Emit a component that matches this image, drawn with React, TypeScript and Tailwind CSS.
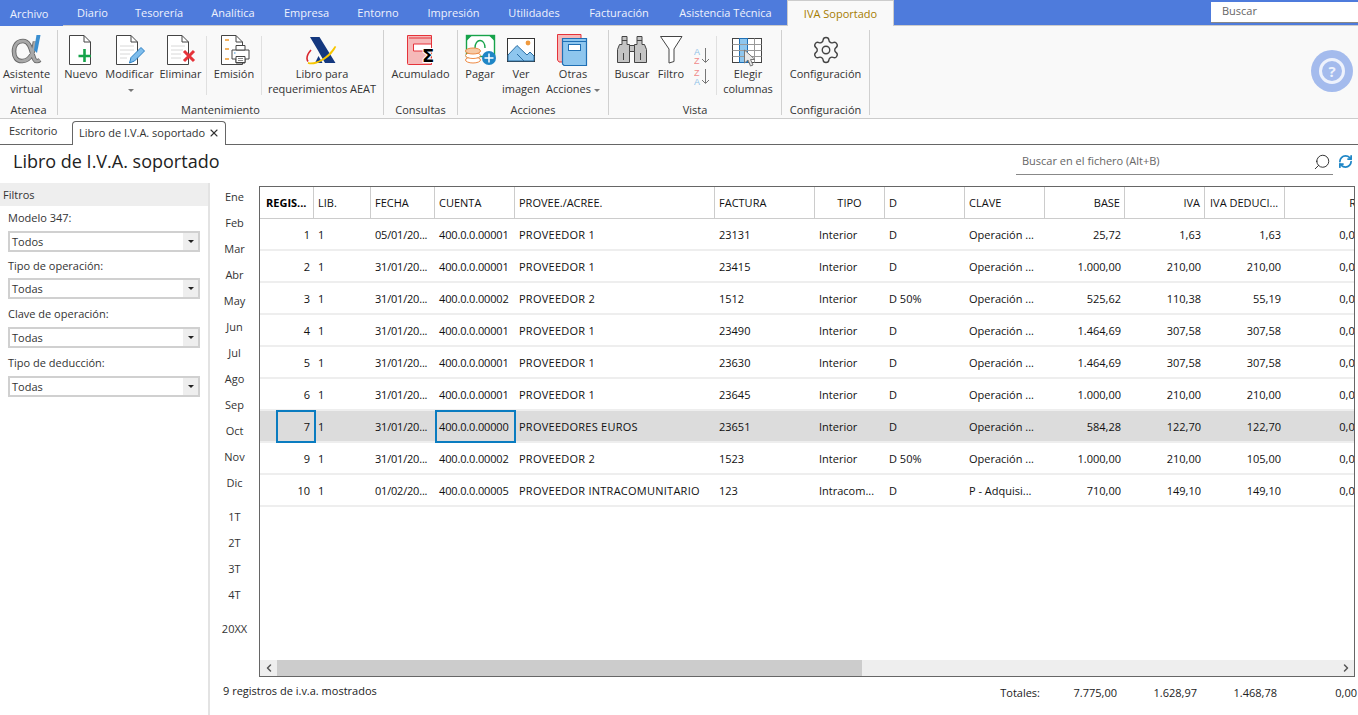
import { FC, ReactNode } from "react";
import { ChevronLeft, ChevronRight, RefreshCw, Search, Settings, X } from "lucide-react";

const menus = [
  { label: "Diario", w: "w-[59px]" },
  { label: "Tesorería", w: "w-[74px]" },
  { label: "Analítica", w: "w-[74px]" },
  { label: "Empresa", w: "w-[73px]" },
  { label: "Entorno", w: "w-[70px]" },
  { label: "Impresión", w: "w-[81px]" },
  { label: "Utilidades", w: "w-[80px]" },
  { label: "Facturación", w: "w-[90px]" },
  { label: "Asistencia Técnica", w: "w-[123px]" },
];

const months = ["Ene", "Feb", "Mar", "Abr", "May", "Jun", "Jul", "Ago", "Sep", "Oct", "Nov", "Dic"];
const quarters = ["1T", "2T", "3T", "4T"];

const filters = [
  { label: "Modelo 347:", value: "Todos", gap: "mt-0", selectGap: "mt-[6px]" },
  { label: "Tipo de operación:", value: "Todas", gap: "mt-[6px]", selectGap: "mt-[5px]" },
  { label: "Clave de operación:", value: "Todas", gap: "mt-[7px]", selectGap: "mt-[6px]" },
  { label: "Tipo de deducción:", value: "Todas", gap: "mt-[7px]", selectGap: "mt-[6px]" },
];

const rows = [
  ["1", "05/01/20...", "400.0.0.00001", "PROVEEDOR 1", "23131", "Interior", "D", "Operación ...", "25,72", "1,63", "1,63"],
  ["2", "31/01/20...", "400.0.0.00001", "PROVEEDOR 1", "23415", "Interior", "D", "Operación ...", "1.000,00", "210,00", "210,00"],
  ["3", "31/01/20...", "400.0.0.00002", "PROVEEDOR 2", "1512", "Interior", "D 50%", "Operación ...", "525,62", "110,38", "55,19"],
  ["4", "31/01/20...", "400.0.0.00001", "PROVEEDOR 1", "23490", "Interior", "D", "Operación ...", "1.464,69", "307,58", "307,58"],
  ["5", "31/01/20...", "400.0.0.00001", "PROVEEDOR 1", "23630", "Interior", "D", "Operación ...", "1.464,69", "307,58", "307,58"],
  ["6", "31/01/20...", "400.0.0.00001", "PROVEEDOR 1", "23645", "Interior", "D", "Operación ...", "1.000,00", "210,00", "210,00"],
  ["7", "31/01/20...", "400.0.0.00000", "PROVEEDORES EUROS", "23651", "Interior", "D", "Operación ...", "584,28", "122,70", "122,70"],
  ["9", "31/01/20...", "400.0.0.00002", "PROVEEDOR 2", "1523", "Interior", "D 50%", "Operación ...", "1.000,00", "210,00", "105,00"],
  ["10", "01/02/20...", "400.0.0.00005", "PROVEEDOR INTRACOMUNITARIO", "123", "Intracom...", "D", "P - Adquisi...", "710,00", "149,10", "149,10"],
];

const Box: FC<{ children: ReactNode }> = ({ children }) => (
  <svg width="36" height="36" viewBox="0 0 36 36" fill="none">
    {children}
  </svg>
);

const DocShape: FC<{ x: number }> = ({ x }) => (
  <>
    <path d={`M${x + 0.5} 3.5H${x + 15}L${x + 21.5} 10V32.5H${x + 0.5}Z`} fill="#fff" stroke="#444" />
    <path d={`M${x + 15} 3.5V10H${x + 21.5}`} stroke="#444" />
  </>
);

const alphaPath = "M26 9.5C24.5 20 22 28.5 13.5 29C7.5 29.5 5 25 5 19.5C5 13 8.5 9 14 9C22 9 22.5 22 25.5 27.5C26.5 29.5 29 29.5 31 28";

const AlphaIcon = () => (
  <Box>
    <path d={alphaPath} stroke="#666" strokeWidth="4.6" />
    <path d={alphaPath} stroke="#a8a8a8" strokeWidth="2.8" />
    <path d="M27.5 3H31.5L28 21L25 18Z" fill="#3b8fd0" />
  </Box>
);

const NewIcon = () => (
  <Box>
    <DocShape x={6} />
    <path d="M21.5 17V30M15.5 24H28" stroke="#16a34a" strokeWidth="2.6" />
  </Box>
);

const EditIcon = () => (
  <Box>
    <DocShape x={4} />
    <path d="M8 14H22M8 18H22M8 22H18M8 26H15" stroke="#d8d8d8" />
    <path d="M17.5 31L19 25.5L29 15.5L32.5 19L22.5 29Z" fill="#7fbdec" stroke="#2b7fc4" />
  </Box>
);

const DeleteIcon = () => (
  <Box>
    <DocShape x={4} />
    <path d="M8 14H22M8 18H20M8 22H18M8 26H18" stroke="#d8d8d8" />
    <path d="M21 19L31 29M31 19L21 29" stroke="#e5333a" strokeWidth="3" />
  </Box>
);

const PrintIcon = () => (
  <Box>
    <DocShape x={5} />
    <path d="M9 8H13M9 17H13M9 27H13" stroke="#ef9a2e" strokeWidth="1.4" />
    <path d="M16 18H33V27H29V31H20V27H16Z" fill="#fff" stroke="#444" />
    <path d="M20 13.5H29V18H20Z" fill="#fff" stroke="#444" />
    <path d="M20 24.5H29V30.5H20Z" fill="#fff" stroke="#444" />
    <path d="M22 26.5H27M22 28.5H27" stroke="#888" />
    <path d="M18 21H19.5" stroke="#3b8fd0" />
  </Box>
);

const AeatIcon = () => (
  <Box>
    <path d="M6 5H15.5L31.5 31H21L14 18.5Z" fill="#14387f" />
    <path d="M11 31L14.5 24L18.5 31Z" fill="#14387f" />
    <path d="M4 31C12 33.5 24 26 31.5 14.5C27 24.5 14 32.5 4 31Z" fill="#f7c600" stroke="#f7c600" strokeWidth="1.6" />
    <path d="M7 18C3.5 22 2 26.5 4 29.5" stroke="#d9282f" strokeWidth="1.6" />
  </Box>
);

const SumIcon = () => (
  <Box>
    <path d="M4.5 3.5H28.5V32.5H5.5Q4.5 32.5 4.5 31.5Z" fill="#f5b9b9" stroke="#e5333a" />
    <path d="M6 6H28" stroke="#e5333a" />
    <path d="M10.5 12H28.5V19H10.5Z" fill="#fff" stroke="#e5333a" />
    <text x="19" y="30" fontFamily="DejaVu Sans, sans-serif" fontSize="18" fontWeight="700" fill="#000" stroke="#fff" strokeWidth="2" paintOrder="stroke">
      Σ
    </text>
  </Box>
);

const PayIcon = () => (
  <Box>
    <rect x="4.5" y="3.5" width="28" height="21" fill="#fff" stroke="#17a34a" strokeWidth="1.4" />
    <path d="M4.5 3.5H10L4.5 9ZM32.5 3.5H27L32.5 9ZM4.5 24.5V19L10 24.5Z" fill="#17a34a" />
    <path d="M13 16C13 6 23 6 23 16" stroke="#17a34a" strokeWidth="1.4" />
    <ellipse cx="11" cy="28" rx="7.5" ry="3" fill="#fff" stroke="#ee8a44" />
    <ellipse cx="11" cy="23.5" rx="7.5" ry="3" fill="#fff" stroke="#ee8a44" />
    <ellipse cx="11" cy="19" rx="7.5" ry="3" fill="#f6c9a4" stroke="#ee8a44" />
    <circle cx="27" cy="26" r="7" fill="#1f86c6" />
    <path d="M27 21.5V30.5M22.5 26H31.5" stroke="#fff" strokeWidth="1.5" />
  </Box>
);

const ImageIcon = () => (
  <Box>
    <rect x="4.5" y="6.5" width="27" height="23" fill="#fff" stroke="#333" />
    <path d="M5 23L14 13.5L24 23L27 20L31 24V29H5Z" fill="#8ec6ee" stroke="#2b6ea3" />
    <path d="M14 22L21 29" stroke="#2b6ea3" />
    <circle cx="25" cy="11" r="2.4" fill="#f09a3e" />
  </Box>
);

const BooksIcon = () => (
  <Box>
    <path d="M2.5 2.5H26V30H4L2.5 28Z" fill="#f5b9b9" stroke="#e5333a" />
    <path d="M7.5 6.5H31.5V33.5H9L7.5 32Z" fill="#8ec6ee" stroke="#1f6fb4" strokeWidth="1.2" />
    <path d="M8 9.5H31" stroke="#1f6fb4" />
    <rect x="13.5" y="12.5" width="12" height="6" fill="#fff" stroke="#1f6fb4" />
  </Box>
);

const BinocularsIcon = () => (
  <Box>
    <path d="M3.5 17.5L5.5 12.5H8V4.5H13V12.5H15.5V30.5H3.5Z" fill="#c4c4c4" stroke="#444" />
    <path d="M32.5 17.5L30.5 12.5H28V4.5H23V12.5H20.5V30.5H32.5Z" fill="#c4c4c4" stroke="#444" />
    <path d="M15.5 13.5H20.5V19.5H15.5Z" fill="#c4c4c4" stroke="#444" />
    <path d="M9.5 21V28M26.5 21V28" stroke="#444" />
    <path d="M8 8.5H13M23 8.5H28" stroke="#444" />
  </Box>
);

const FunnelIcon = () => (
  <Box>
    <path d="M7.5 4.5H29L21 17V29.5L16 31V17Z" fill="#fff" stroke="#444" />
  </Box>
);

const SortIcon: FC<{ top: string; bottom: string; topColor: string; bottomColor: string }> = ({
  top,
  bottom,
  topColor,
  bottomColor,
}) => (
  <svg width="16" height="18" viewBox="0 0 16 18" fill="none">
    <text x="0" y="8" fontFamily="Liberation Sans, sans-serif" fontSize="9" fill={topColor}>
      {top}
    </text>
    <text x="0" y="17" fontFamily="Liberation Sans, sans-serif" fontSize="9" fill={bottomColor}>
      {bottom}
    </text>
    <path d="M11.5 1V15M8 12L11.5 15.5L15 12" stroke="#777" />
  </svg>
);

const ColumnsIcon = () => (
  <Box>
    <rect x="2.5" y="6.5" width="29" height="24" fill="#fff" stroke="#444" />
    <rect x="9.5" y="6.5" width="8" height="24" fill="#8ec6ee" stroke="#1f6fb4" />
    <path d="M2.5 12.5H31.5M2.5 18.5H31.5M2.5 24.5H31.5M24.5 6.5V30.5" stroke="#999" />
    <path d="M14.5 18V31L18 28L20.5 34L23 33L20.5 27.5H25Z" fill="#e8e8e8" stroke="#777" />
  </Box>
);

const Item: FC<{ w: string; icon: ReactNode; children?: ReactNode }> = ({ w, icon, children }) => (
  <div className={`${w} flex flex-col items-center text-center leading-[15px]`}>
    <div className="flex h-[34px] w-[36px] items-start justify-center">{icon}</div>
    <div className="whitespace-nowrap">{children}</div>
  </div>
);

const Group: FC<{ w: string; label: string; children: ReactNode }> = ({ w, label, children }) => (
  <div className={`${w} mb-[3px] mt-[4px] flex shrink-0 flex-col border-r border-[#d0d0d0] pt-[2px]`}>
    <div className="flex h-[70px]">{children}</div>
    <div className="-mb-[2px] mt-auto text-center leading-[15px]">{label}</div>
  </div>
);

const Divider = () => <div className="mb-[7px] mt-[4px] w-px bg-[#e0e0e0]" />;

const Caret = () => (
  <span className="ml-[3px] inline-block border-x-[3px] border-t-[3px] border-x-transparent border-t-[#777] align-middle" />
);

const Ribbon = () => (
  <div className="flex h-[94px] items-stretch border-y border-[#cccccc] bg-[#f9f9f9] text-[#333]">
    <Group w="w-[58px]" label="Atenea">
      <Item w="w-[53px]" icon={<AlphaIcon />}>
        Asistente
        <br />
        virtual
      </Item>
    </Group>
    <Group w="w-[326px]" label="Mantenimiento">
      <Item w="w-[46px]" icon={<NewIcon />}>
        Nuevo
      </Item>
      <Item w="w-[51px]" icon={<EditIcon />}>
        Modificar
        <br />
        <Caret />
      </Item>
      <Item w="w-[51px]" icon={<DeleteIcon />}>
        Eliminar
      </Item>
      <Divider />
      <Item w="w-[54px]" icon={<PrintIcon />}>
        Emisión
      </Item>
      <Divider />
      <Item w="w-[120px]" icon={<AeatIcon />}>
        Libro para
        <br />
        requerimientos AEAT
      </Item>
    </Group>
    <Group w="w-[74px]" label="Consultas">
      <Item w="w-[73px]" icon={<SumIcon />}>
        Acumulado
      </Item>
    </Group>
    <Group w="w-[151px]" label="Acciones">
      <Item w="w-[44px]" icon={<PayIcon />}>
        Pagar
      </Item>
      <Item w="w-[38px]" icon={<ImageIcon />}>
        Ver
        <br />
        imagen
      </Item>
      <Item w="w-[66px]" icon={<BooksIcon />}>
        Otras
        <br />
        Acciones
        <Caret />
      </Item>
    </Group>
    <Group w="w-[173px]" label="Vista">
      <Item w="w-[46px]" icon={<BinocularsIcon />}>
        Buscar
      </Item>
      <Item w="w-[32px]" icon={<FunnelIcon />}>
        Filtro
      </Item>
      <div className="flex w-[29px] flex-col items-center gap-[3px] pt-[15px]">
        <SortIcon top="A" bottom="Z" topColor="#8cbfe8" bottomColor="#f08a8a" />
        <SortIcon top="Z" bottom="A" topColor="#f08a8a" bottomColor="#8cbfe8" />
      </div>
      <Divider />
      <Item w="w-[62px]" icon={<ColumnsIcon />}>
        Elegir
        <br />
        columnas
      </Item>
    </Group>
    <Group w="w-[88px]" label="Configuración">
      <Item
        w="w-[87px]"
        icon={<Settings size={30} strokeWidth={1.1} color="#444" className="mt-[3px]" />}
      >
        Configuración
      </Item>
    </Group>
  </div>
);

const Select: FC<{ value: string; className: string }> = ({ value, className }) => (
  <div className={`${className} mx-2 flex h-[21px] items-center border-2 border-[#d0d0d0] bg-white pl-[2px]`}>
    <span className="flex-1 pt-px">{value}</span>
    <span className="flex h-full w-[15px] items-center justify-center bg-[#eeeeee]">
      <span className="border-x-[3px] border-t-[3px] border-x-transparent border-t-[#222]" />
    </span>
  </div>
);

const Sidebar = () => (
  <div className="mt-[5px] w-[210px] shrink-0 border-r-2 border-[#e3e3e3] text-[#333]">
    <div className="h-[23px] bg-[#eeeeee] pl-[3px] leading-[23px]">Filtros</div>
    <div className="pt-[4px]">
      {filters.map((filter) => (
        <div key={filter.label} className={filter.gap}>
          <div className="pl-2 leading-[15px]">{filter.label}</div>
          <Select value={filter.value} className={filter.selectGap} />
        </div>
      ))}
    </div>
  </div>
);

const Periods = () => (
  <div className="flex w-[49px] shrink-0 flex-col items-center pt-[6px] text-[#333]">
    {months.map((month) => (
      <div key={month} className="h-[26px] leading-[26px]">
        {month}
      </div>
    ))}
    <div className="mt-[8px]" />
    {quarters.map((quarter) => (
      <div key={quarter} className="h-[26px] leading-[26px]">
        {quarter}
      </div>
    ))}
    <div className="mt-[8px] h-[26px] leading-[26px]">20XX</div>
  </div>
);

const widths = [
  "w-[54px]",
  "w-[57px]",
  "w-[64px]",
  "w-[80px]",
  "w-[200px]",
  "w-[100px]",
  "w-[70px]",
  "w-[80px]",
  "w-[80px]",
  "w-[80px]",
  "w-[80px]",
  "w-[80px]",
  "w-[80px]",
];

const headers = [
  { t: "REGIS...", c: "pl-[6px] font-bold text-black" },
  { t: "LIB.", c: "pl-1" },
  { t: "FECHA", c: "pl-1" },
  { t: "CUENTA", c: "pl-1" },
  { t: "PROVEE./ACREE.", c: "pl-1" },
  { t: "FACTURA", c: "pl-1" },
  { t: "TIPO", c: "text-center" },
  { t: "D", c: "pl-1" },
  { t: "CLAVE", c: "pl-1" },
  { t: "BASE", c: "pr-1 text-right" },
  { t: "IVA", c: "pr-1 text-right" },
  { t: "IVA DEDUCI...", c: "pl-[5px]" },
  { t: "R", c: "pr-[8px] text-right" },
];

const Cell: FC<{ w: string; className?: string; children: ReactNode }> = ({ w, className, children }) => (
  <div className={`${w} h-full shrink-0 overflow-hidden whitespace-nowrap leading-[31px] ${className ?? ""}`}>{children}</div>
);

const Grid = () => (
  <div className="flex h-[491px] w-[1096px] flex-col overflow-hidden border border-[#666666] bg-white text-[#111]">
    <div className="flex h-[32px] w-[1200px] shrink-0 border-b border-[#cccccc] leading-[31px]">
      {headers.map((header, i) => (
        <div key={header.t} className={`${widths[i]} h-full shrink-0 overflow-hidden whitespace-nowrap border-r border-[#cccccc] ${header.c}`}>
          {header.t}
        </div>
      ))}
    </div>
    <div className="min-h-0 flex-1">
      {rows.map((row) => {
        const selected = row[0] === "7";
        return (
          <div
            key={row[0]}
            className={`flex h-[32px] w-[1200px] border-b-2 border-[#eeeeee] ${selected ? "bg-[#dcdcdc]" : "bg-white"}`}
          >
            <div className={`${widths[0]} relative h-full shrink-0 pr-[4px] text-right leading-[31px]`}>
              {row[0]}
              {selected && <div className="absolute bottom-[-2px] left-[16px] right-[-2px] top-[-1px] border-2 border-[#0a7cc0]" />}
            </div>
            <Cell w={widths[1]} className="pl-1">1</Cell>
            <Cell w={widths[2]} className="pl-1 tracking-[-0.2px]">{row[1]}</Cell>
            <div className={`${widths[3]} relative h-full shrink-0 pl-1 leading-[31px] tracking-[-0.15px]`}>
              {row[2]}
              {selected && <div className="absolute bottom-[-2px] left-0 right-[-1px] top-[-1px] border-2 border-[#0a7cc0]" />}
            </div>
            <Cell w={widths[4]} className="pl-1 tracking-[0.25px]">{row[3]}</Cell>
            <Cell w={widths[5]} className="pl-1">{row[4]}</Cell>
            <Cell w={widths[6]} className="pl-1">{row[5]}</Cell>
            <Cell w={widths[7]} className="pl-1">{row[6]}</Cell>
            <Cell w={widths[8]} className="pl-1">{row[7]}</Cell>
            <Cell w={widths[9]} className="pr-1 text-right">{row[8]}</Cell>
            <Cell w={widths[10]} className="pr-1 text-right">{row[9]}</Cell>
            <Cell w={widths[11]} className="pr-1 text-right">{row[10]}</Cell>
            <Cell w={widths[12]} className="pr-1 text-right">0,00</Cell>
          </div>
        );
      })}
    </div>
    <div className="flex h-[16px] shrink-0 items-center bg-[#eeeeee]">
      <div className="flex h-full w-[17px] items-center justify-center">
        <ChevronLeft size={12} strokeWidth={3} color="#555" />
      </div>
      <div className="h-full w-[585px] bg-[#cccccc]" />
      <div className="flex-1" />
      <div className="flex h-full w-[17px] items-center justify-center">
        <ChevronRight size={12} strokeWidth={3} color="#555" />
      </div>
    </div>
  </div>
);

const Totals = () => (
  <div className="-mr-[2px] flex h-[33px] items-center pl-[13px] text-[#222]">
    <div className="flex-1 -translate-y-[2px]">9 registros de i.v.a. mostrados</div>
    <div className="flex">
      <div className="w-[41px] text-right">Totales:</div>
      <div className="w-[77px] text-right">7.775,00</div>
      <div className="w-[80px] text-right">1.628,97</div>
      <div className="w-[80px] text-right">1.468,78</div>
      <div className="w-[80px] text-right">0,00</div>
    </div>
  </div>
);

export default function App() {
  return (
    <div
      className="relative h-[715px] w-[1358px] overflow-hidden bg-white text-[11px]"
      style={{ fontFamily: '"Open Sans", "Noto Sans", sans-serif' }}
    >
      {/* menu */}
      <div className="flex h-[25px] items-stretch bg-[#4e7bdc] text-[#eef2fc]">
        <div className="relative z-10 flex h-[26px] w-[63px] items-center justify-start bg-[#4e7bdc] pl-[10px] pt-[2px]">Archivo</div>
        {menus.map((menu) => (
          <div key={menu.label} className={`${menu.w} flex items-center justify-center pt-[2px]`}>
            {menu.label}
          </div>
        ))}
        <div className="relative z-10 flex h-[26px] w-[107px] items-center justify-center border-x border-t border-[#cccccc] bg-[#f9f9f9] pt-[2px] text-[#a67c00]">
          IVA Soportado
        </div>
        <div className="flex-1" />
        <div className="mt-[2px] flex h-[21px] w-[147px] items-center border-b border-[#888] bg-white pb-px pl-[11px] text-[#666]">
          Buscar
        </div>
      </div>
      <Ribbon />

      {/* help button */}
      <div className="absolute left-[1311px] top-[50px] flex h-[42px] w-[42px] items-center justify-center rounded-full bg-[#a4bbed]">
        <div className="flex h-[26px] w-[26px] items-center justify-center rounded-full border-[3px] border-[#eef2fc] text-[15px] font-bold text-[#eef2fc]">
          ?
        </div>
      </div>

      {/* document tabs */}
      <div className="flex h-[26px] items-end border-b border-[#666666] text-[#333]">
        <div className="flex h-[24px] w-[72px] items-center pb-px pl-[9px]">Escritorio</div>
        <div className="-mb-px flex h-[24px] w-[154px] items-center gap-[3px] rounded-t-[4px] border-x border-t border-[#666666] bg-white pb-px pl-[6px]">
          Libro de I.V.A. soportado
          <X size={12} strokeWidth={2.2} color="#333" />
        </div>
      </div>

      {/* title */}
      <div className="flex h-[33px] items-center justify-between">
        <div className="pl-[13px] text-[18px] text-[#222]">Libro de I.V.A. soportado</div>
        <div className="flex items-center">
          <div className="flex h-[27px] w-[317px] items-center justify-between border-b border-[#888] pl-[6px] pr-[2px] pt-px text-[#666]">
            Buscar en el fichero (Alt+B)
            <Search size={18} strokeWidth={1.2} color="#222" className="-scale-x-100" />
          </div>
          <div className="flex w-[25px] justify-center">
            <RefreshCw size={15} strokeWidth={2.8} color="#1f86c6" />
          </div>
        </div>
      </div>

      {/* body */}
      <div className="flex h-[537px]">
        <Sidebar />
        <Periods />
        <div className="flex flex-col pt-[8px]">
          <Grid />
          <div className="-ml-[49px]">
            <Totals />
          </div>
        </div>
      </div>
    </div>
  );
}
